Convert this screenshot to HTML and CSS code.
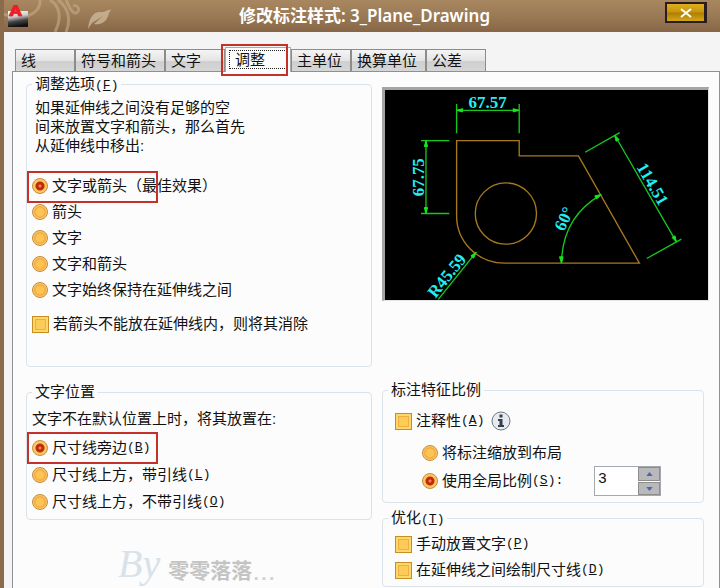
FILE: index.html
```html
<!DOCTYPE html>
<html lang="zh-CN">
<head>
<meta charset="utf-8">
<title>修改标注样式: 3_Plane_Drawing</title>
<link rel="stylesheet" href="styles.css">
</head>
<body>
<main class="window">
  <header class="titlebar">
    <svg class="flourish" viewBox="0 0 120 32" aria-hidden="true">
      <path class="curl" d="M0 14C18 22 37 14 36 0M46 0C56 6 58 18 51 32M54 0C65 8 67 20 62 32M62 0C66 8 68 14 72 13C77 11 74 4 69 6"/>
      <path class="leaf" d="M84 29C85 18 89 12 96 12C101 13 104 9 107 10C105 12 105 14 104 16C102 23 95 25 90 24L99 16L88 23Z"/>
    </svg>
    <svg class="app-icon" viewBox="0 0 21 23" aria-hidden="true">
      <defs><linearGradient id="disk" x1="0" y1="0" x2="0.2" y2="1"><stop offset="0" stop-color="#fff"/><stop offset=".4" stop-color="#ccc"/><stop offset=".7" stop-color="#444"/><stop offset="1" stop-color="#111"/></linearGradient></defs>
      <rect x="0" y="6" width="20" height="16" fill="url(#disk)"/>
      <path d="M1 11L6 0H9L14 11H10.500L9.500 8.500H5.500L4.700 11ZM6.200 6.500H9L7.700 3Z" fill="#f01c24" stroke="#f01c24" stroke-width=".8"/>
    </svg>
    <h1 class="title">修改标注样式: 3_Plane_Drawing</h1>
    <button class="close" type="button" aria-label="关闭"><svg viewBox="0 0 12 10"><path d="M1 1L11 9M11 1L1 9"/></svg></button>
  </header>
  <div class="tabs" role="tablist">
    <button class="tab" type="button" role="tab">线</button>
    <button class="tab" type="button" role="tab">符号和箭头</button>
    <button class="tab" type="button" role="tab">文字</button>
    <button class="tab active" type="button" role="tab" aria-selected="true"><span class="focus">调整</span><i class="mark mark-tab"></i></button>
    <button class="tab" type="button" role="tab">主单位</button>
    <button class="tab" type="button" role="tab">换算单位</button>
    <button class="tab" type="button" role="tab">公差</button>
  </div>
  <div class="panel" role="tabpanel">
    <div class="column">
      <fieldset class="group group-fit">
        <legend>调整选项<span class="key">(<u>F</u>)</span></legend>
        <p class="intro">如果延伸线之间没有足够的空<br>间来放置文字和箭头，那么首先<br>从延伸线中移出:</p>
        <label class="option"><input type="radio" name="fit" checked>文字或箭头（最佳效果）<i class="mark"></i></label>
        <label class="option"><input type="radio" name="fit">箭头</label>
        <label class="option"><input type="radio" name="fit">文字</label>
        <label class="option"><input type="radio" name="fit">文字和箭头</label>
        <label class="option"><input type="radio" name="fit">文字始终保持在延伸线之间</label>
        <label class="option separate"><input type="checkbox">若箭头不能放在延伸线内，则将其消除</label>
      </fieldset>
      <fieldset class="group group-place">
        <legend>文字位置</legend>
        <p class="hint">文字不在默认位置上时，将其放置在:</p>
        <label class="option"><input type="radio" name="place" checked>尺寸线旁边<span class="key">(<u>B</u>)</span><i class="mark"></i></label>
        <label class="option"><input type="radio" name="place">尺寸线上方，带引线<span class="key">(<u>L</u>)</span></label>
        <label class="option"><input type="radio" name="place">尺寸线上方，不带引线<span class="key">(<u>O</u>)</span></label>
      </fieldset>
      <p class="signature"><span class="by">By</span><span class="name">零零落落</span><span class="dots">...</span></p>
    </div>
    <div class="column">
      <div class="preview">
        <svg viewBox="30 30 970 632" role="img" aria-label="标注预览">
          <g class="shape">
            <path d="M245 182H433V228H611L794 550H388A143 143 0 0 1 245 405Z"/>
            <circle cx="393" cy="401" r="92"/>
          </g>
          <g class="dim">
            <path d="M245 72V160M433 72V160M245 91H433M138 182H223M138 401H223M153 182V401M631 217L735 158M816 536L920 478M720 166L905 486M190 659L304 517M560 550Q562 412 679 344"/>
          </g>
          <path class="arrow" d="M245 91l18 -5v10zM433 91l-18 -5v10zM153 182l-5 18h10zM153 401l-5 -18h10zM720 166l4 18 9 -5zM905 486l-13 -13 9 -5zM304 517l-16 11 8 7zM560 550l-6 -19h11zM679 344l-19 4 6 9z"/>
          <g class="value">
            <text x="338" y="84">67.57</text>
            <text transform="translate(147 292) rotate(-90)">67.75</text>
            <text transform="translate(819 321) rotate(60)">114.51</text>
            <text transform="translate(583 424) rotate(-65)">60°</text>
            <text transform="translate(229 598) rotate(-51)">R45.59</text>
          </g>
        </svg>
      </div>
      <fieldset class="group group-scale">
        <legend>标注特征比例</legend>
        <div class="line">
          <label class="option"><input type="checkbox">注释性<span class="key">(<u>A</u>)</span></label>
          <svg class="info" viewBox="0 0 20 20" aria-hidden="true"><circle cx="10" cy="10" r="9"/><path d="M8.500 3.500h3v3h-3zM7 8h4.500v6H13v2H7v-2h1.500v-4H7z"/></svg>
        </div>
        <div class="nested">
          <label class="option"><input type="radio" name="scale">将标注缩放到布局</label>
          <div class="line">
            <label class="option"><input type="radio" name="scale" checked>使用全局比例<span class="key">(<u>S</u>):</span></label>
            <div class="spinner">
              <input type="text" inputmode="numeric" value="3" aria-label="全局比例">
              <div class="steps">
                <button type="button" aria-label="增加"><svg viewBox="0 0 8 5"><path d="M0 5L4 0L8 5Z"/></svg></button>
                <button type="button" aria-label="减少"><svg viewBox="0 0 8 5"><path d="M0 0H8L4 5Z"/></svg></button>
              </div>
            </div>
          </div>
        </div>
      </fieldset>
      <fieldset class="group group-tune">
        <legend>优化<span class="key">(<u>T</u>)</span></legend>
        <label class="option"><input type="checkbox">手动放置文字<span class="key">(<u>P</u>)</span></label>
        <label class="option"><input type="checkbox">在延伸线之间绘制尺寸线<span class="key">(<u>D</u>)</span></label>
      </fieldset>
    </div>
  </div>
</main>
</body>
</html>
```
FILE: styles.css
```css
* { box-sizing: border-box; }

body {
  margin: 0;
  font: 15px/18px "Liberation Sans", "Noto Sans CJK SC", sans-serif;
  color: #111;
  background: #f4f4f4;
}

button, input { font: inherit; color: inherit; margin: 0; }

.window {
  display: flex;
  flex-direction: column;
  min-height: 100vh;
  border-left: 4px solid #8a6c4c;
  overflow: hidden;
}

.titlebar {
  position: relative;
  display: grid;
  grid-template-columns: 1fr auto 1fr;
  align-items: center;
  height: 32px;
  padding: 0 13px 0 4px;
  background: linear-gradient(#a88760, #9a7a55 50%, #866646);
}

.flourish { position: absolute; left: 0; top: 0; width: 120px; height: 32px; }
.curl { fill: none; stroke: #c4ac8c; stroke-width: 3; opacity: .6; }
.leaf { fill: #cdb798; opacity: .8; }

.app-icon { position: relative; width: 21px; height: 23px; }

.title {
  margin: 0 0 0 14px;
  font: 600 17px/24px "Noto Sans", "Noto Sans CJK SC", sans-serif;
  color: #fff;
}

.close {
  justify-self: end;
  align-self: start;
  display: flex;
  align-items: center;
  justify-content: center;
  width: 42px;
  height: 21px;
  margin-top: 2px;
  padding: 0;
  border: 2px solid #2b1c20;
  border-right-width: 3px;
  background: linear-gradient(#dcae20, #c89508 48%, #ac7e04 52%, #d6a614);
}
.close svg { width: 12px; height: 10px; fill: none; stroke: #fff; stroke-width: 2; }

.tabs {
  display: flex;
  align-items: flex-end;
  height: 39px;
  padding-left: 11px;
}

.tab {
  min-width: 60px;
  height: 22px;
  padding: 0 8px 0 5px;
  border: 1px solid #8d8d88;
  border-bottom: 0;
  text-align: left;
  line-height: 20px;
  white-space: nowrap;
  background: linear-gradient(#f4f4f4, #e4e4e4 50%, #cfcfcf 55%, #d6d6d6);
}

.tab.active {
  position: relative;
  z-index: 1;
  width: 66px;
  height: 25px;
  margin-bottom: -1px;
  padding: 0 3px 2px;
  border-color: #aaa;
  background: #fcfcfc;
}

.focus {
  display: block;
  padding-left: 5px;
  border: 1px dotted #222;
  line-height: 17px;
}

.mark {
  position: absolute;
  left: -5px;
  top: -2px;
  width: 131px;
  height: 32px;
  border: 2px solid #c4312b;
  pointer-events: none;
}
.mark-tab { top: -4px; width: 67px; }

.panel {
  flex: 1;
  display: grid;
  grid-template-columns: 346fr 327fr;
  gap: 10px;
  margin-left: 8px;
  padding: 3px 10px 0 13px;
  border: 1px solid #8c9097;
  border-bottom: 0;
  background: #fcfcfc;
}

.column { display: flex; flex-direction: column; }

.group {
  min-width: 0;
  margin: 0;
  padding: 0 5px;
  border: 1px solid #dbe3ea;
  border-radius: 4px;
}
.group legend { padding: 0 3px; }
.group p { margin: 0; }

.key { font: 13px/16px "Liberation Mono", monospace; }

.group-fit { padding-bottom: 29px; }
.intro { padding: 4px 3px 18px; line-height: 19px; }

.group-place { margin-top: 16px; padding-bottom: 4px; }
.hint { padding: 9px 0 6px; }

.option {
  position: relative;
  display: flex;
  align-items: center;
  width: fit-content;
  height: 26px;
  white-space: nowrap;
}
.group-place .option { height: 27px; }
.separate { margin-top: 8px; }

.option input {
  appearance: none;
  flex: none;
  width: 16px;
  height: 16px;
  margin-right: 4px;
  border: 1px solid #c58a35;
}
.option input[type="radio"] {
  border-radius: 50%;
  background: radial-gradient(circle, #fdc453 0 4px, #f2a63b 5px, #fbd27a 7px);
}
.option input[type="radio"]:checked {
  background: radial-gradient(circle, #f0805a 0 1px, #c12a08 2px 4px, #fbc766 5px 7px);
}
.option input[type="checkbox"] {
  width: 17px;
  height: 17px;
  border-color: #c78d1e;
  background: #fdcb57;
  box-shadow: inset 0 0 0 2px #fbd76c, inset 0 0 0 3px #eeb03d;
}

.signature {
  display: flex;
  align-items: flex-end;
  height: 48px;
  margin: 20px 0 0 92px;
  color: #c4c4c4;
  line-height: 34px;
  white-space: nowrap;
}
.by { font: italic 40px/48px "Liberation Serif", serif; color: #d8e2ea; }
.name { margin-left: 8px; font-size: 21px; font-weight: 700; }
.dots { font-size: 28px; color: #cfd0e2; }

.preview {
  margin-top: 12px;
  border: 3px solid #a4a4a4;
  border-right: 1px solid #e4e4e4;
  border-bottom: 1px solid #e4e4e4;
  background: #000;
}
.preview svg { display: block; width: 100%; }
.shape, .dim { fill: none; stroke-width: 4; }
.shape { stroke: #a87a20; }
.dim { stroke: #14c81e; }
.arrow { fill: #14e81e; stroke: #14e81e; stroke-width: 3; }
.value {
  fill: #20f0f4;
  font: 700 51px "Liberation Serif", serif;
  text-anchor: middle;
}

.line { display: flex; align-items: center; }

.group-scale { margin: 80px 5px 0 0; padding: 0 12px 6px; }
.group-scale legend, .group-tune legend { margin-left: -7px; }
.group-scale > .line { padding: 9px 0 6px; }
.nested { padding-left: 27px; }

.info { width: 20px; height: 20px; margin-left: 7px; }
.info circle { fill: #e7ebef; stroke: #6c7884; stroke-width: 1; }
.info path { fill: #34404e; }

.spinner {
  display: flex;
  width: 67px;
  height: 30px;
  margin-left: 31px;
  border: 1px solid #a3a9ae;
  background: #fff;
}
.spinner input { flex: 1; min-width: 0; padding: 0 3px 6px; border: 0; background: none; }
.steps { display: flex; flex-direction: column; gap: 1px; width: 22px; }
.steps button {
  flex: 1;
  display: flex;
  align-items: center;
  justify-content: center;
  padding: 0;
  border: 1px solid #8d8d8d;
  background: #b9b9bb;
}
.steps svg { width: 7px; height: 4px; fill: #4a64b8; }

.group-tune { margin: 6px 5px 0 0; padding: 0 12px 3px; }
.group-tune .option:first-of-type { margin-top: 3px; }
```
